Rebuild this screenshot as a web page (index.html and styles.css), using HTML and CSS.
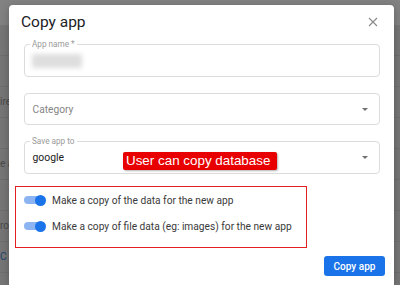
FILE: index.html
```html
<!DOCTYPE html>
<html lang="en">
<head>
<meta charset="utf-8">
<title>Copy app</title>
<link rel="stylesheet" href="styles.css">
</head>
<body>
    <div class="page">
        <div class="page-top"></div>
        <div class="page-row">&nbsp;</div>
        <div class="page-row">&nbsp;</div>
        <div class="page-row">ire</div>
        <div class="page-row">&nbsp;</div>
        <div class="page-row">e a</div>
        <div class="page-row">&nbsp;</div>
        <div class="page-row">ron</div>
        <div class="page-row blue">C</div>
    </div>

    <div class="dialog">
        <div class="dialog-head">
            <h1 class="dialog-title">Copy app</h1>
            <svg class="close" width="10" height="10" viewBox="0 0 10 10">
                <path d="M1 1 L9 9 M9 1 L1 9" stroke="#8a8a8a" stroke-width="1.1" fill="none"/>
            </svg>
        </div>

        <div class="fields">
            <div class="field">
                <span class="field-label">App name *</span>
                <div class="blurred"></div>
            </div>
            <div class="field short">
                <span class="placeholder">Category</span>
                <span class="arrow"></span>
            </div>
            <div class="field">
                <span class="field-label">Save app to</span>
                <span class="value">google</span>
                <span class="arrow"></span>
                <span class="badge">User can copy database</span>
            </div>
        </div>

        <div class="toggles">
            <div class="toggle-row">
                <span class="switch"></span>
                <span class="toggle-text">Make a copy of the data for the new app</span>
            </div>
            <div class="toggle-row">
                <span class="switch"></span>
                <span class="toggle-text">Make a copy of file data (eg: images) for the new app</span>
            </div>
        </div>

        <div class="actions">
            <button class="btn-primary">Copy app</button>
        </div>
    </div>
</body>
</html>
```

FILE: styles.css
```css
body{
    margin: 0;
    background-color: #767676;
    font-family: Roboto, "Liberation Sans", sans-serif;
    overflow: hidden;
    height: 285px;
}

/* page behind the overlay */
.page{
    width: 400px;
}
.page-top{
    height: 25px;
    background-color: #828282;
}
.page-row{
    height: 30px;
    line-height: 30px;
    border-bottom: 1px solid #6e6e6e;
    color: #4a4a4a;
    font-size: 10px;
}
.page-row.blue{
    color: #1d3f73;
}

.dialog{
    position: absolute;
    left: 9px;
    top: 5px;
    width: 385px;
    height: 280px;
    background-color: #fff;
    border-radius: 4px 4px 0 0;
    box-shadow: 0 2px 8px rgba(0,0,0,0.25);
    padding-top: 8px;
    box-sizing: border-box;
}

.dialog-head{
    display: flex;
    justify-content: space-between;
    align-items: center;
    padding: 0 16px 0 12px;
}
.dialog-title{
    margin: 0;
    font-size: 15.5px;
    line-height: 18px;
    font-weight: 400;
    color: #202124;
}
.close{
    display: block;
}

.fields{
    display: flex;
    flex-direction: column;
    gap: 16px;
    margin: 13px 14px 0 15px;
}
.field{
    position: relative;
    height: 33px;
    box-sizing: border-box;
    border: 1px solid #dcdcdc;
    border-radius: 4px;
    display: flex;
    align-items: center;
    padding: 0 8px 0 7.5px;
}
.field.short{
    height: 32px;
}
.field-label{
    position: absolute;
    left: 5px;
    top: -6px;
    padding: 0 2px;
    background-color: #fff;
    font-size: 8.2px;
    line-height: 10px;
    color: #9a9a9a;
}
.blurred{
    width: 50px;
    height: 14px;
    margin-left: -1px;
    background-color: #dedede;
    filter: blur(2.5px);
}
.placeholder{
    font-size: 10.2px;
    color: #858585;
}
.value{
    font-size: 10.4px;
    color: #222;
}
.arrow{
    margin-left: auto;
    margin-right: 3px;
    width: 0;
    height: 0;
    border-left: 3px solid transparent;
    border-right: 3px solid transparent;
    border-top: 3px solid #707070;
}
.badge{
    position: absolute;
    left: 98px;
    top: 10px;
    height: 18px;
    line-height: 18px;
    padding: 0 7px 0 3px;
    background-color: #e80000;
    color: #fff;
    font-family: "Liberation Sans", Arial, sans-serif;
    font-size: 13.4px;
    border-radius: 2px;
    box-shadow: 1px 1px 2px rgba(0,0,0,0.3);
}

.toggles{
    margin: 12px 0 0 6px;
    width: 292px;
    box-sizing: border-box;
    border: 1.5px solid #e32020;
    padding: 0 0 8px 7.5px;
}
.toggle-row{
    height: 26px;
    display: flex;
    align-items: center;
}
.switch{
    position: relative;
    width: 22px;
    height: 11px;
    margin-right: 6.5px;
    flex: none;
}
.switch::before{
    content: "";
    position: absolute;
    left: 0;
    top: 1.5px;
    width: 20px;
    height: 8px;
    border-radius: 4px;
    background-color: #8db4f2;
}
.switch::after{
    content: "";
    position: absolute;
    right: 0;
    top: 0;
    width: 11px;
    height: 11px;
    border-radius: 50%;
    background-color: #1a73e8;
}
.toggle-text{
    font-size: 10.2px;
    color: #3a3a3a;
}

.actions{
    display: flex;
    justify-content: flex-end;
    margin-top: 8px;
    padding-right: 9px;
}
.btn-primary{
    height: 20px;
    width: 61px;
    border: none;
    border-radius: 3px;
    background-color: #1a73e8;
    color: #fff;
    font-family: Roboto, sans-serif;
    font-size: 10px;
    font-weight: 500;
    padding: 0;
}
```
